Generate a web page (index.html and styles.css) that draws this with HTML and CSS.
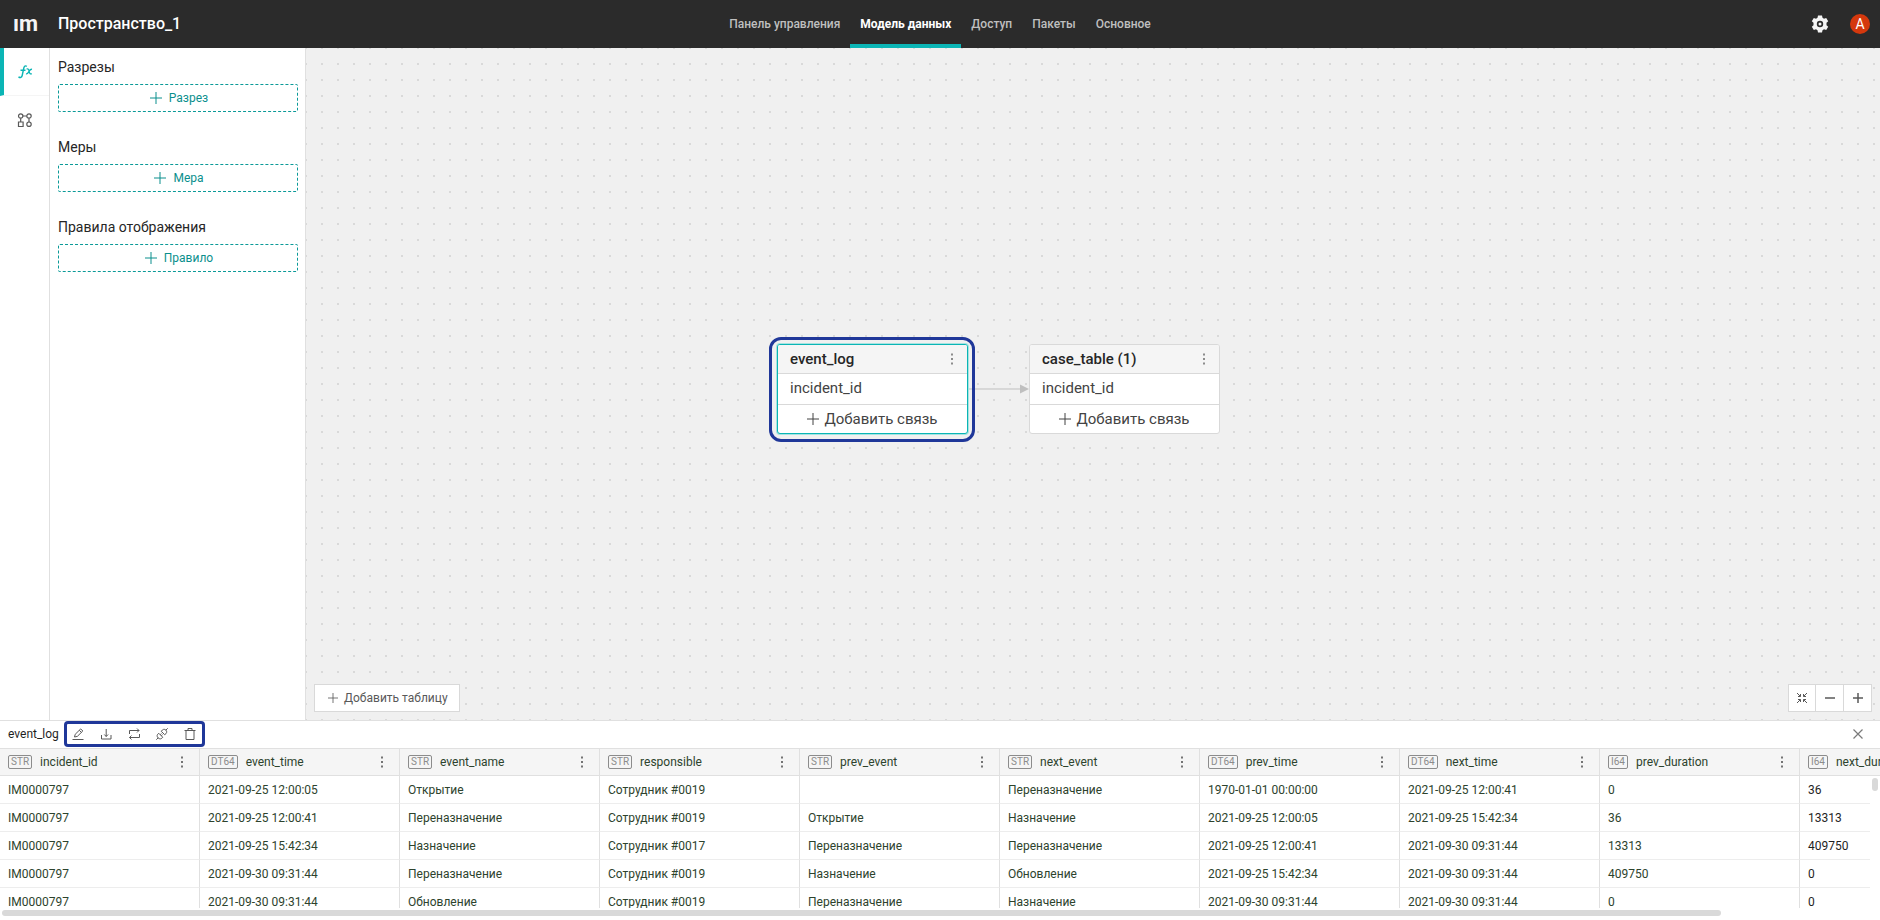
FILE: index.html
```html
<!DOCTYPE html>
<html lang="ru">
<head>
<meta charset="utf-8">
<title>Пространство_1</title>
<link rel="stylesheet" href="styles.css">
</head>
<body>
<svg class="sprite" aria-hidden="true">
  <symbol id="plus" viewBox="0 0 12 12"><path d="M6 0V12M0 6H12"/></symbol>
  <symbol id="kebab" viewBox="0 0 4 12"><path class="fill" d="M1 0.500h2v2h-2zM1 5h2v2h-2zM1 9.500h2v2h-2z"/></symbol>
</svg>
<div class="app">
  <header class="topbar">
    <div class="brand">
      <span class="logo">ım</span>
      <h1 class="title">Пространство_1</h1>
    </div>
    <nav class="tabs">
      <a class="tab" href="#">Панель управления</a>
      <a class="tab tab-active" href="#">Модель данных</a>
      <a class="tab" href="#">Доступ</a>
      <a class="tab" href="#">Пакеты</a>
      <a class="tab" href="#">Основное</a>
    </nav>
    <div class="account">
      <button class="gear" aria-label="Настройки">
        <svg width="18" height="18" viewBox="0 0 18 18"><path class="gear-body" fill-rule="evenodd" d="M7 0.500h4l.5 2.300 1.500.9 2.200-.8 2 3.400-1.700 1.500v2.400l1.700 1.500-2 3.400-2.200-.8-1.500.9-.5 2.300H7l-.5-2.300L5 14.300l-2.200.8-2-3.400 1.700-1.500V7.800L.8 6.300l2-3.400L5 3.700l1.500-.9zM9 5.800a3.200 3.200 0 1 0 0 6.400a3.200 3.200 0 1 0 0-6.400z"/><circle class="gear-body" cx="9" cy="9" r="1.500"/></svg>
      </button>
      <button class="avatar">A</button>
    </div>
  </header>

  <div class="workspace">
    <nav class="rail">
      <button class="rail-item rail-active" aria-label="Формулы">
        <svg class="line" width="16" height="16" viewBox="0 0 16 16"><path stroke-width="1.400" d="M9.800 2.300C8.300 1.300 7.200 2 6.800 4L5.200 11.500C4.800 13.500 3.300 13.900 1.500 13M3.500 6.300H8.500"/><path stroke-width="1.300" d="M9.600 5.200c1.300-.6 1.900-.2 2.300 1.200l.6 2.200c.4 1.300 1 1.700 2.300 1M15 5.300c-1.400-.4-2.200.8-2.900 1.900s-1.400 3.100-3.100 2.600"/></svg>
      </button>
      <button class="rail-item" aria-label="Связи">
        <svg class="line" width="16" height="16" viewBox="0 0 16 16"><g stroke-width="1.200"><circle cx="3.700" cy="4" r="2.200"/><circle cx="12" cy="4" r="2.200"/><circle cx="12" cy="12.200" r="2.200"/><path d="M1.500 10h4.600v4.500H1.500zM5.900 4H9.800M3.700 6.200V10M12 6.200V10"/></g></svg>
      </button>
    </nav>

    <aside class="panel">
      <section class="group">
        <h2 class="group-title">Разрезы</h2>
        <button class="add"><svg class="line" width="12" height="12"><use href="#plus"/></svg>Разрез</button>
      </section>
      <section class="group">
        <h2 class="group-title">Меры</h2>
        <button class="add"><svg class="line" width="12" height="12"><use href="#plus"/></svg>Мера</button>
      </section>
      <section class="group">
        <h2 class="group-title">Правила отображения</h2>
        <button class="add"><svg class="line" width="12" height="12"><use href="#plus"/></svg>Правило</button>
      </section>
    </aside>

    <main class="canvas">
      <svg class="edge" width="62" height="10" viewBox="0 0 62 10"><path class="edge-line" d="M0 5H54"/><path class="edge-head" d="M53 0.500L62 5L53 9.500z"/></svg>
      <div class="highlight"></div>
      <article class="node node-log">
        <div class="node-head"><span>event_log</span><button class="more" aria-label="Меню"><svg width="4" height="12"><use href="#kebab"/></svg></button></div>
        <div class="node-field">incident_id</div>
        <button class="node-link"><svg class="line" width="12" height="12"><use href="#plus"/></svg>Добавить связь</button>
      </article>
      <article class="node node-case">
        <div class="node-head"><span>case_table (1)</span><button class="more" aria-label="Меню"><svg width="4" height="12"><use href="#kebab"/></svg></button></div>
        <div class="node-field">incident_id</div>
        <button class="node-link"><svg class="line" width="12" height="12"><use href="#plus"/></svg>Добавить связь</button>
      </article>
      <button class="add-table"><svg class="line" width="10" height="10"><use href="#plus"/></svg>Добавить таблицу</button>
      <div class="zoom">
        <button aria-label="Вписать"><svg class="line" width="12" height="12" viewBox="0 0 12 12"><path d="M1 1L4.300 4.300M11 1L7.700 4.300M1 11L4.300 7.700M11 11L7.700 7.700"/><path d="M2 4.500h2.500V2M10 4.500h-2.500V2M2 7.500h2.500V10M10 7.500h-2.500V10"/></svg></button>
        <button aria-label="Уменьшить"><svg class="line" width="10" height="10" viewBox="0 0 10 10"><path stroke-width="1.500" d="M0 5H10"/></svg></button>
        <button aria-label="Увеличить"><svg class="line" width="10" height="10" viewBox="0 0 10 10"><path stroke-width="1.500" d="M0 5H10M5 0V10"/></svg></button>
      </div>
    </main>
  </div>

  <section class="data">
    <div class="data-bar">
      <span class="data-name">event_log</span>
      <div class="tools">
        <button aria-label="Изменить"><svg class="line" width="12" height="12" viewBox="0 0 12 12"><path d="M0.500 11.500H11.500M2.500 9L3.200 6.300L8.700 0.900L10.800 3L5.300 8.400zM7.300 2.300L9.400 4.400"/></svg></button>
        <button aria-label="Загрузить"><svg class="line" width="12" height="12" viewBox="0 0 12 12"><path d="M1.500 7V11H11V7M6.200 1V8.500M4.300 6.500L6.200 8.500L8.100 6.500"/></svg></button>
        <button aria-label="Обновить"><svg class="line" width="12" height="12" viewBox="0 0 12 12"><path d="M1.500 6V2.500H11M9 0.500L11 2.500L9 4.500M11.500 6V9.500H1.500M3.500 7.500L1.500 9.500L3.500 11.500"/></svg></button>
        <button aria-label="Подключение"><svg class="line" width="12" height="12" viewBox="0 0 12 12"><path d="M5.300 3.300L8.700 6.700C10.800 5.500 11.300 3.500 9.900 2.100S6.500 1.200 5.300 3.300zM2.800 5.300L6.700 9.200C5.500 11.300 3.500 11.300 2.100 9.900S.7 6.500 2.800 5.300zM9.900 2.100L11.700.3M2.100 9.900L.3 11.700M4.200 6.700L5.500 5.400M5.300 7.800L6.600 6.500"/></svg></button>
        <button aria-label="Удалить"><svg class="line" width="12" height="12" viewBox="0 0 12 12"><path d="M0.500 2.500H11.500M4 2.500V0.500H8V2.500M2 2.500V11.500H10V2.500"/></svg></button>
      </div>
      <button class="close" aria-label="Закрыть"><svg class="line" width="10" height="10" viewBox="0 0 10 10"><path stroke-width="1.200" d="M0.500 0.500L9.500 9.500M9.500 0.500L0.500 9.500"/></svg></button>
    </div>
    <div class="grid">
      <table>
        <thead>
          <tr id="head"></tr>
        </thead>
        <tbody id="rows"></tbody>
      </table>
      <div class="track-y"><div class="thumb-y"></div></div>
    </div>
    <div class="track-x"><div class="thumb-x"></div></div>
  </section>
</div>
<script src="table.js"></script>
</body>
</html>
```

FILE: styles.css
```css
* { box-sizing: border-box; }

body {
  margin: 0;
  font: 12px/16px Roboto, "Liberation Sans", sans-serif;
  color: #262626;
  background: #fff;
}

button {
  padding: 0;
  border: 0;
  background: none;
  font: inherit;
  color: inherit;
  display: flex;
  align-items: center;
  justify-content: center;
}

svg { display: block; flex: none; }
.line { fill: none; stroke: currentColor; }
.fill { fill: currentColor; }
.sprite { position: absolute; width: 0; height: 0; }

.app {
  height: 100vh;
  display: grid;
  grid-template-rows: 48px minmax(0, 1fr) 200px;
}

/* Top bar */
.topbar {
  display: grid;
  grid-template-columns: 1fr auto 1fr;
  background: #2b2b2b;
  color: #f5f5f5;
}
.brand { display: flex; align-items: center; padding-left: 13px; }
.logo { width: 45px; font-size: 22px; line-height: 24px; font-weight: 700; }
.title { margin: 0; font-size: 16px; line-height: 24px; font-weight: 500; color: #fff; }
.tabs { display: flex; }
.tab {
  display: flex;
  align-items: center;
  padding: 4px 10px 0;
  border-bottom: 4px solid transparent;
  color: #bfbfbf;
  font-weight: 500;
  text-decoration: none;
}
.tab-active { color: #fff; font-weight: 700; border-color: #0bb5b5; }
.account {
  display: flex;
  align-items: center;
  justify-content: flex-end;
  gap: 21px;
  padding-right: 10px;
}
.gear-body { fill: #f5f5f5; }
.avatar {
  width: 20px;
  height: 20px;
  border-radius: 50%;
  background: #d4380d;
  color: #fff;
  font-size: 14px;
}

/* Workspace */
.workspace { display: grid; grid-template-columns: 50px 256px minmax(0, 1fr); }
.rail { border-right: 1px solid #e0e0e0; }
.rail-item { width: 100%; height: 48px; color: #595959; }
.rail-active {
  border-left: 4px solid #0bb5b5;
  border-bottom: 1px solid #f5f5f5;
  padding-right: 4px;
  color: #0bb5b5;
}
.panel {
  display: flex;
  flex-direction: column;
  gap: 24px;
  padding: 8px 7px 8px 8px;
  border-right: 1px solid #e0e0e0;
}
.group { display: grid; gap: 6px; }
.group-title { margin: 0; font-size: 14px; line-height: 22px; font-weight: 400; }
.add {
  height: 28px;
  gap: 7px;
  padding-left: 2px;
  border: 1px dashed #0b9a98;
  border-radius: 2px;
  color: #0b8f8d;
}

/* Model canvas */
.canvas {
  position: relative;
  overflow: hidden;
  background: conic-gradient(at 2px 2px, #f0f0f0 75%, #d9d9d9 0) -1px -1px / 16px 16px;
}
.node {
  position: absolute;
  top: 296px;
  width: 191px;
  border: 1px solid #d9d9d9;
  border-radius: 3px;
  background: #fff;
  color: #434343;
  font-size: 15px;
  line-height: 20px;
  overflow: hidden;
}
.node-log { left: 471px; border-color: #0bb5b5; box-shadow: 0 0 0 1px #a6e3e1; }
.node-case { left: 723px; }
.node-head {
  display: flex;
  align-items: center;
  justify-content: space-between;
  height: 29px;
  padding: 0 13px 0 12px;
  border-bottom: 1px solid #d9d9d9;
  background: #f5f5f5;
  color: #262626;
  font-weight: 500;
}
.more { color: #8c8c8c; }
.node-field { height: 31px; padding: 4px 12px 6px; border-bottom: 1px solid #d9d9d9; }
.node-link { width: 100%; height: 28px; gap: 5px; }
.highlight {
  position: absolute;
  left: 463px;
  top: 289px;
  width: 206px;
  height: 105px;
  border: 3px solid #1f3799;
  border-radius: 12px;
}
.edge { position: absolute; left: 661px; top: 336px; }
.edge-line { stroke: #bfbfbf; }
.edge-head { fill: #bfbfbf; }
.add-table {
  position: absolute;
  left: 8px;
  bottom: 8px;
  height: 28px;
  padding: 0 11px 0 13px;
  gap: 6px;
  border: 1px solid #d9d9d9;
  background: #fff;
  color: #595959;
}
.zoom {
  position: absolute;
  right: 8px;
  bottom: 8px;
  display: flex;
  height: 28px;
  border: 1px solid #d9d9d9;
  background: #fff;
  color: #595959;
}
.zoom button { width: 26px; }
.zoom button + button { width: 28px; border-left: 1px solid #d9d9d9; }

/* Data preview */
.data {
  display: grid;
  grid-template-columns: minmax(0, 1fr);
  grid-template-rows: 28px minmax(0, 1fr) 12px;
  border-top: 1px solid #e0e0e0;
}
.data-bar { display: flex; align-items: center; padding: 0 17px 2px 8px; }
.data-name { color: #1f1f1f; }
.tools {
  display: flex;
  height: 26px;
  margin: 0 auto 0 5px;
  padding-right: 1px;
  border-radius: 4px;
  box-shadow: inset 0 0 0 3px #1f3799;
  color: #595959;
}
.tools button { width: 28px; }
.close { color: #7a7a7a; }
.grid { position: relative; overflow: hidden; border-top: 1px solid #e0e0e0; margin-top: -1px; }
table { width: 2000px; table-layout: fixed; border-collapse: separate; border-spacing: 0; color: #2d432d; }
th, td { padding: 0 8px; text-align: left; font-weight: 400; border-right: 1px solid #e0e0e0; white-space: nowrap; }
th { height: 27px; background: #f5f5f5; border-bottom: 1px solid #e0e0e0; }
td { height: 28px; border-bottom: 1px solid #ededed; }
td:last-child { color: #1f1f1f; }
.column { display: flex; align-items: center; gap: 8px; }
.column .more { margin-left: auto; margin-right: 7px; color: #737373; }
.type {
  padding: 0 2px;
  border: 1px solid #8c8c8c;
  border-radius: 2px;
  color: #8c8c8c;
  font-size: 10px;
  line-height: 12px;
}
.track-y { position: absolute; top: 27px; right: 0; bottom: 0; width: 10px; background: #fff; }
.thumb-y { width: 6px; height: 13px; margin: 2px; border-radius: 3px; background: #d9d9d9; }
.track-x { padding: 2px 10px 0 2px; }
.thumb-x { width: 92%; height: 6px; border-radius: 3px; background: #d9d9d9; }
```

FILE: table.js
```js
const columns = [
  ["STR", "incident_id"], ["DT64", "event_time"], ["STR", "event_name"], ["STR", "responsible"],
  ["STR", "prev_event"], ["STR", "next_event"], ["DT64", "prev_time"], ["DT64", "next_time"],
  ["I64", "prev_duration"], ["I64", "next_duration"]
];
const rows = [
  ["IM0000797", "2021-09-25 12:00:05", "Открытие", "Сотрудник #0019", "", "Переназначение", "1970-01-01 00:00:00", "2021-09-25 12:00:41", "0", "36"],
  ["IM0000797", "2021-09-25 12:00:41", "Переназначение", "Сотрудник #0019", "Открытие", "Назначение", "2021-09-25 12:00:05", "2021-09-25 15:42:34", "36", "13313"],
  ["IM0000797", "2021-09-25 15:42:34", "Назначение", "Сотрудник #0017", "Переназначение", "Переназначение", "2021-09-25 12:00:41", "2021-09-30 09:31:44", "13313", "409750"],
  ["IM0000797", "2021-09-30 09:31:44", "Переназначение", "Сотрудник #0019", "Назначение", "Обновление", "2021-09-25 15:42:34", "2021-09-30 09:31:44", "409750", "0"],
  ["IM0000797", "2021-09-30 09:31:44", "Обновление", "Сотрудник #0019", "Переназначение", "Назначение", "2021-09-30 09:31:44", "2021-09-30 09:31:44", "0", "0"]
];
document.getElementById("head").innerHTML = columns.map(([type, name]) =>
  `<th scope="col"><div class="column"><span class="type">${type}</span><span>${name}</span><button class="more" aria-label="Меню"><svg width="4" height="12"><use href="#kebab"/></svg></button></div></th>`
).join("");
document.getElementById("rows").innerHTML = rows.map(row =>
  `<tr>${row.map(cell => `<td>${cell}</td>`).join("")}</tr>`
).join("");
```
